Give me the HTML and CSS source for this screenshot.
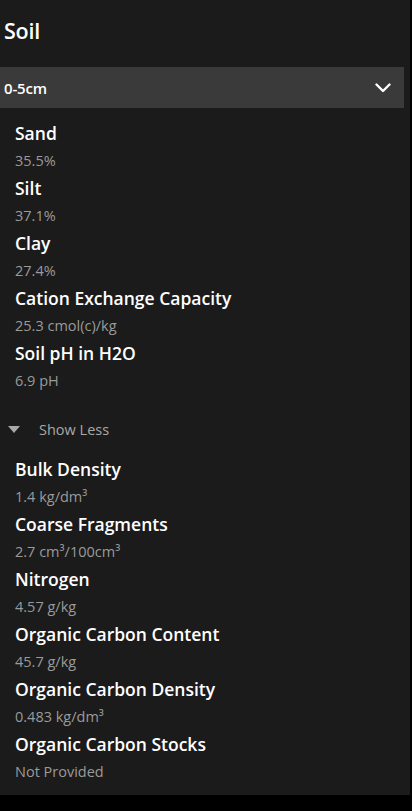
FILE: index.html
```html
<!DOCTYPE html>
<html>
<head>
<meta charset="utf-8">
<link rel="stylesheet" href="styles.css">
</head>
<body>
<div class="panel">
  <h1 class="title">Soil</h1>
  <div class="select">
    <span class="select-text">0-5cm</span>
    <svg class="chev" width="16" height="10" viewBox="0 0 16 10"><path d="M1.5 1.5 L8 8 L14.5 1.5" fill="none" stroke="#fff" stroke-width="2.4" stroke-linecap="round" stroke-linejoin="round"/></svg>
  </div>
  <div class="list list-first">
    <div class="item"><div class="label">Sand</div><div class="value">35.5%</div></div>
    <div class="item"><div class="label">Silt</div><div class="value">37.1%</div></div>
    <div class="item"><div class="label">Clay</div><div class="value">27.4%</div></div>
    <div class="item"><div class="label">Cation Exchange Capacity</div><div class="value">25.3 cmol(c)/kg</div></div>
    <div class="item"><div class="label">Soil pH in H2O</div><div class="value">6.9 pH</div></div>
  </div>
  <div class="toggle">
    <svg class="tri" width="12" height="7" viewBox="0 0 12 7"><path d="M0 0 H12 L6 7 Z" fill="#a8a8a8"/></svg>
    <span class="toggle-text">Show Less</span>
  </div>
  <div class="list">
    <div class="item"><div class="label">Bulk Density</div><div class="value">1.4 kg/dm³</div></div>
    <div class="item"><div class="label">Coarse Fragments</div><div class="value">2.7 cm³/100cm³</div></div>
    <div class="item"><div class="label">Nitrogen</div><div class="value">4.57 g/kg</div></div>
    <div class="item"><div class="label">Organic Carbon Content</div><div class="value">45.7 g/kg</div></div>
    <div class="item"><div class="label">Organic Carbon Density</div><div class="value">0.483 kg/dm³</div></div>
    <div class="item"><div class="label">Organic Carbon Stocks</div><div class="value">Not Provided</div></div>
  </div>
</div>
</body>
</html>
```
FILE: styles.css
```css
html, body {
  margin: 0;
  padding: 0;
  background: #000;
}
body {
  font-family: "Open Sans", "Noto Sans", sans-serif;
  color: #fff;
  width: 412px;
  height: 811px;
  overflow: hidden;
}
.panel {
  width: 410px;
  height: 795px;
  background: #1b1b1b;
  display: flex;
  flex-direction: column;
}
.title {
  margin: 0;
  padding: 16px 0 0 4px;
  font-size: 21.5px;
  font-weight: 600;
  line-height: 30px;
  height: 51px;
  box-sizing: border-box;
  letter-spacing: -0.2px;
}
.select {
  margin-top: 16px;
  width: 404px;
  height: 41px;
  background: #3a3a3a;
  display: flex;
  align-items: center;
  justify-content: space-between;
  padding: 0 13px 0 4px;
  box-sizing: border-box;
}
.select-text {
  font-size: 15px;
  font-weight: 600;
  letter-spacing: -0.2px;
}
.chev { display: block; }
.list {
  padding-left: 15px;
  display: flex;
  flex-direction: column;
}
.list-first { margin-top: 12px; }
.item { display: flex; flex-direction: column; }
.label {
  font-size: 17.5px;
  font-weight: 600;
  line-height: 27px;
}
.value {
  font-size: 14.5px;
  line-height: 28px;
  color: #9a9a9a;
}
.toggle {
  display: flex;
  align-items: center;
  height: 40px;
  margin: 14px 0 7px 0;
  padding-left: 8px;
}
.tri { display: block; margin-right: 19px; }
.toggle-text {
  font-size: 14.5px;
  color: #a8a8a8;
}
```
